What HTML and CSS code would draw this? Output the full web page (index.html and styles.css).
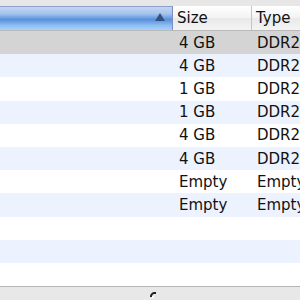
FILE: index.html
```html
<!DOCTYPE html>
<html lang="en">
<head>
    <meta charset="UTF-8">
    <title>Memory Slots</title>
    <link rel="stylesheet" href="styles.css">
</head>
<body>
<div class="window">
    <div class="top-strip"></div>

    <div class="header">
        <div class="col col-slot sorted">
            <span class="sort-arrow"></span>
        </div>
        <div class="col col-size">Size</div>
        <div class="col col-type">Type</div>
    </div>

    <div class="rows">
        <div class="row selected"><div class="col col-slot"></div><div class="col col-size">4 GB</div><div class="col col-type">DDR2</div></div>
        <div class="row odd"><div class="col col-slot"></div><div class="col col-size">4 GB</div><div class="col col-type">DDR2</div></div>
        <div class="row"><div class="col col-slot"></div><div class="col col-size">1 GB</div><div class="col col-type">DDR2</div></div>
        <div class="row odd"><div class="col col-slot"></div><div class="col col-size">1 GB</div><div class="col col-type">DDR2</div></div>
        <div class="row"><div class="col col-slot"></div><div class="col col-size">4 GB</div><div class="col col-type">DDR2</div></div>
        <div class="row odd"><div class="col col-slot"></div><div class="col col-size">4 GB</div><div class="col col-type">DDR2</div></div>
        <div class="row"><div class="col col-slot"></div><div class="col col-size">Empty</div><div class="col col-type">Empty</div></div>
        <div class="row odd"><div class="col col-slot"></div><div class="col col-size">Empty</div><div class="col col-type">Empty</div></div>
        <div class="row"></div>
        <div class="row odd"></div>
        <div class="row"></div>
    </div>

    <div class="bottom-bar">
        <svg class="grip" width="8" height="7" viewBox="0 0 8 7">
            <path d="M1 6 C1 3 3 1 6 1 L7 1 L7 3 L5 3 C4 3 3 4 3 6 Z" fill="#222"/>
            <rect x="3" y="5" width="2" height="2" fill="#fff"/>
        </svg>
    </div>
</div>
</body>
</html>
```

FILE: styles.css
```css
body {
  margin: 0;
  padding: 0;
  background-color: #ffffff;
  font-family: "DejaVu Sans", sans-serif;
  font-size: 15px;
  color: #111111;
}

.window {
  width: 300px;
  height: 300px;
  display: flex;
  flex-direction: column;
  overflow: hidden;
}

.top-strip {
  height: 6px;
  background-color: #e7e7e7;
}

/* Column header */
.header {
  display: flex;
  height: 24px;
  border-bottom: 1px solid #b9b9b9;
  background: linear-gradient(#ffffff, #f3f3f3 50%, #e9e9e9 51%, #f4f4f4);
}

.col {
  display: flex;
  align-items: center;
  white-space: nowrap;
  overflow: hidden;
}

.col-slot {
  width: 173px;
  flex-shrink: 0;
}

.col-size {
  width: 79px;
  flex-shrink: 0;
  padding-left: 4px;
  box-sizing: border-box;
}

.col-type {
  flex: 1;
  padding-left: 4px;
}

.header .col-slot {
  border-right: 1px solid #7c8fc4;
}

.header .col-size {
  border-right: 1px solid #c4c4c4;
}

.header .sorted {
  justify-content: flex-end;
  box-sizing: border-box;
  padding-right: 7px;
  border-top: 1px solid #8d9dcf;
  background: linear-gradient(#c3d6f1, #a4c3ee 30%, #6a9ee0 48%, #5b91da 55%, #8cbdf4 80%, #a9d3fb);
}

.sort-arrow {
  width: 0;
  height: 0;
  margin-top: -3px;
  border-left: 5px solid transparent;
  border-right: 5px solid transparent;
  border-bottom: 8px solid #35527f;
}

/* Rows */
.rows {
  flex: 1;
  display: flex;
  flex-direction: column;
}

.row {
  flex: 1;
  display: flex;
  background-color: #ffffff;
}

.row.odd {
  background-color: #edf3fe;
}

.row.selected {
  background-color: #d4d4d4;
}

.row .col-size {
  padding-left: 6px;
}

.row .col-type {
  padding-left: 5px;
}

/* Bottom bar */
.bottom-bar {
  height: 13px;
  border-top: 1px solid #b5b5b5;
  background-color: #e8e8e8;
  display: flex;
  justify-content: center;
  align-items: flex-start;
  padding-left: 6px;
}

.grip {
  margin-top: 4px;
}
```
